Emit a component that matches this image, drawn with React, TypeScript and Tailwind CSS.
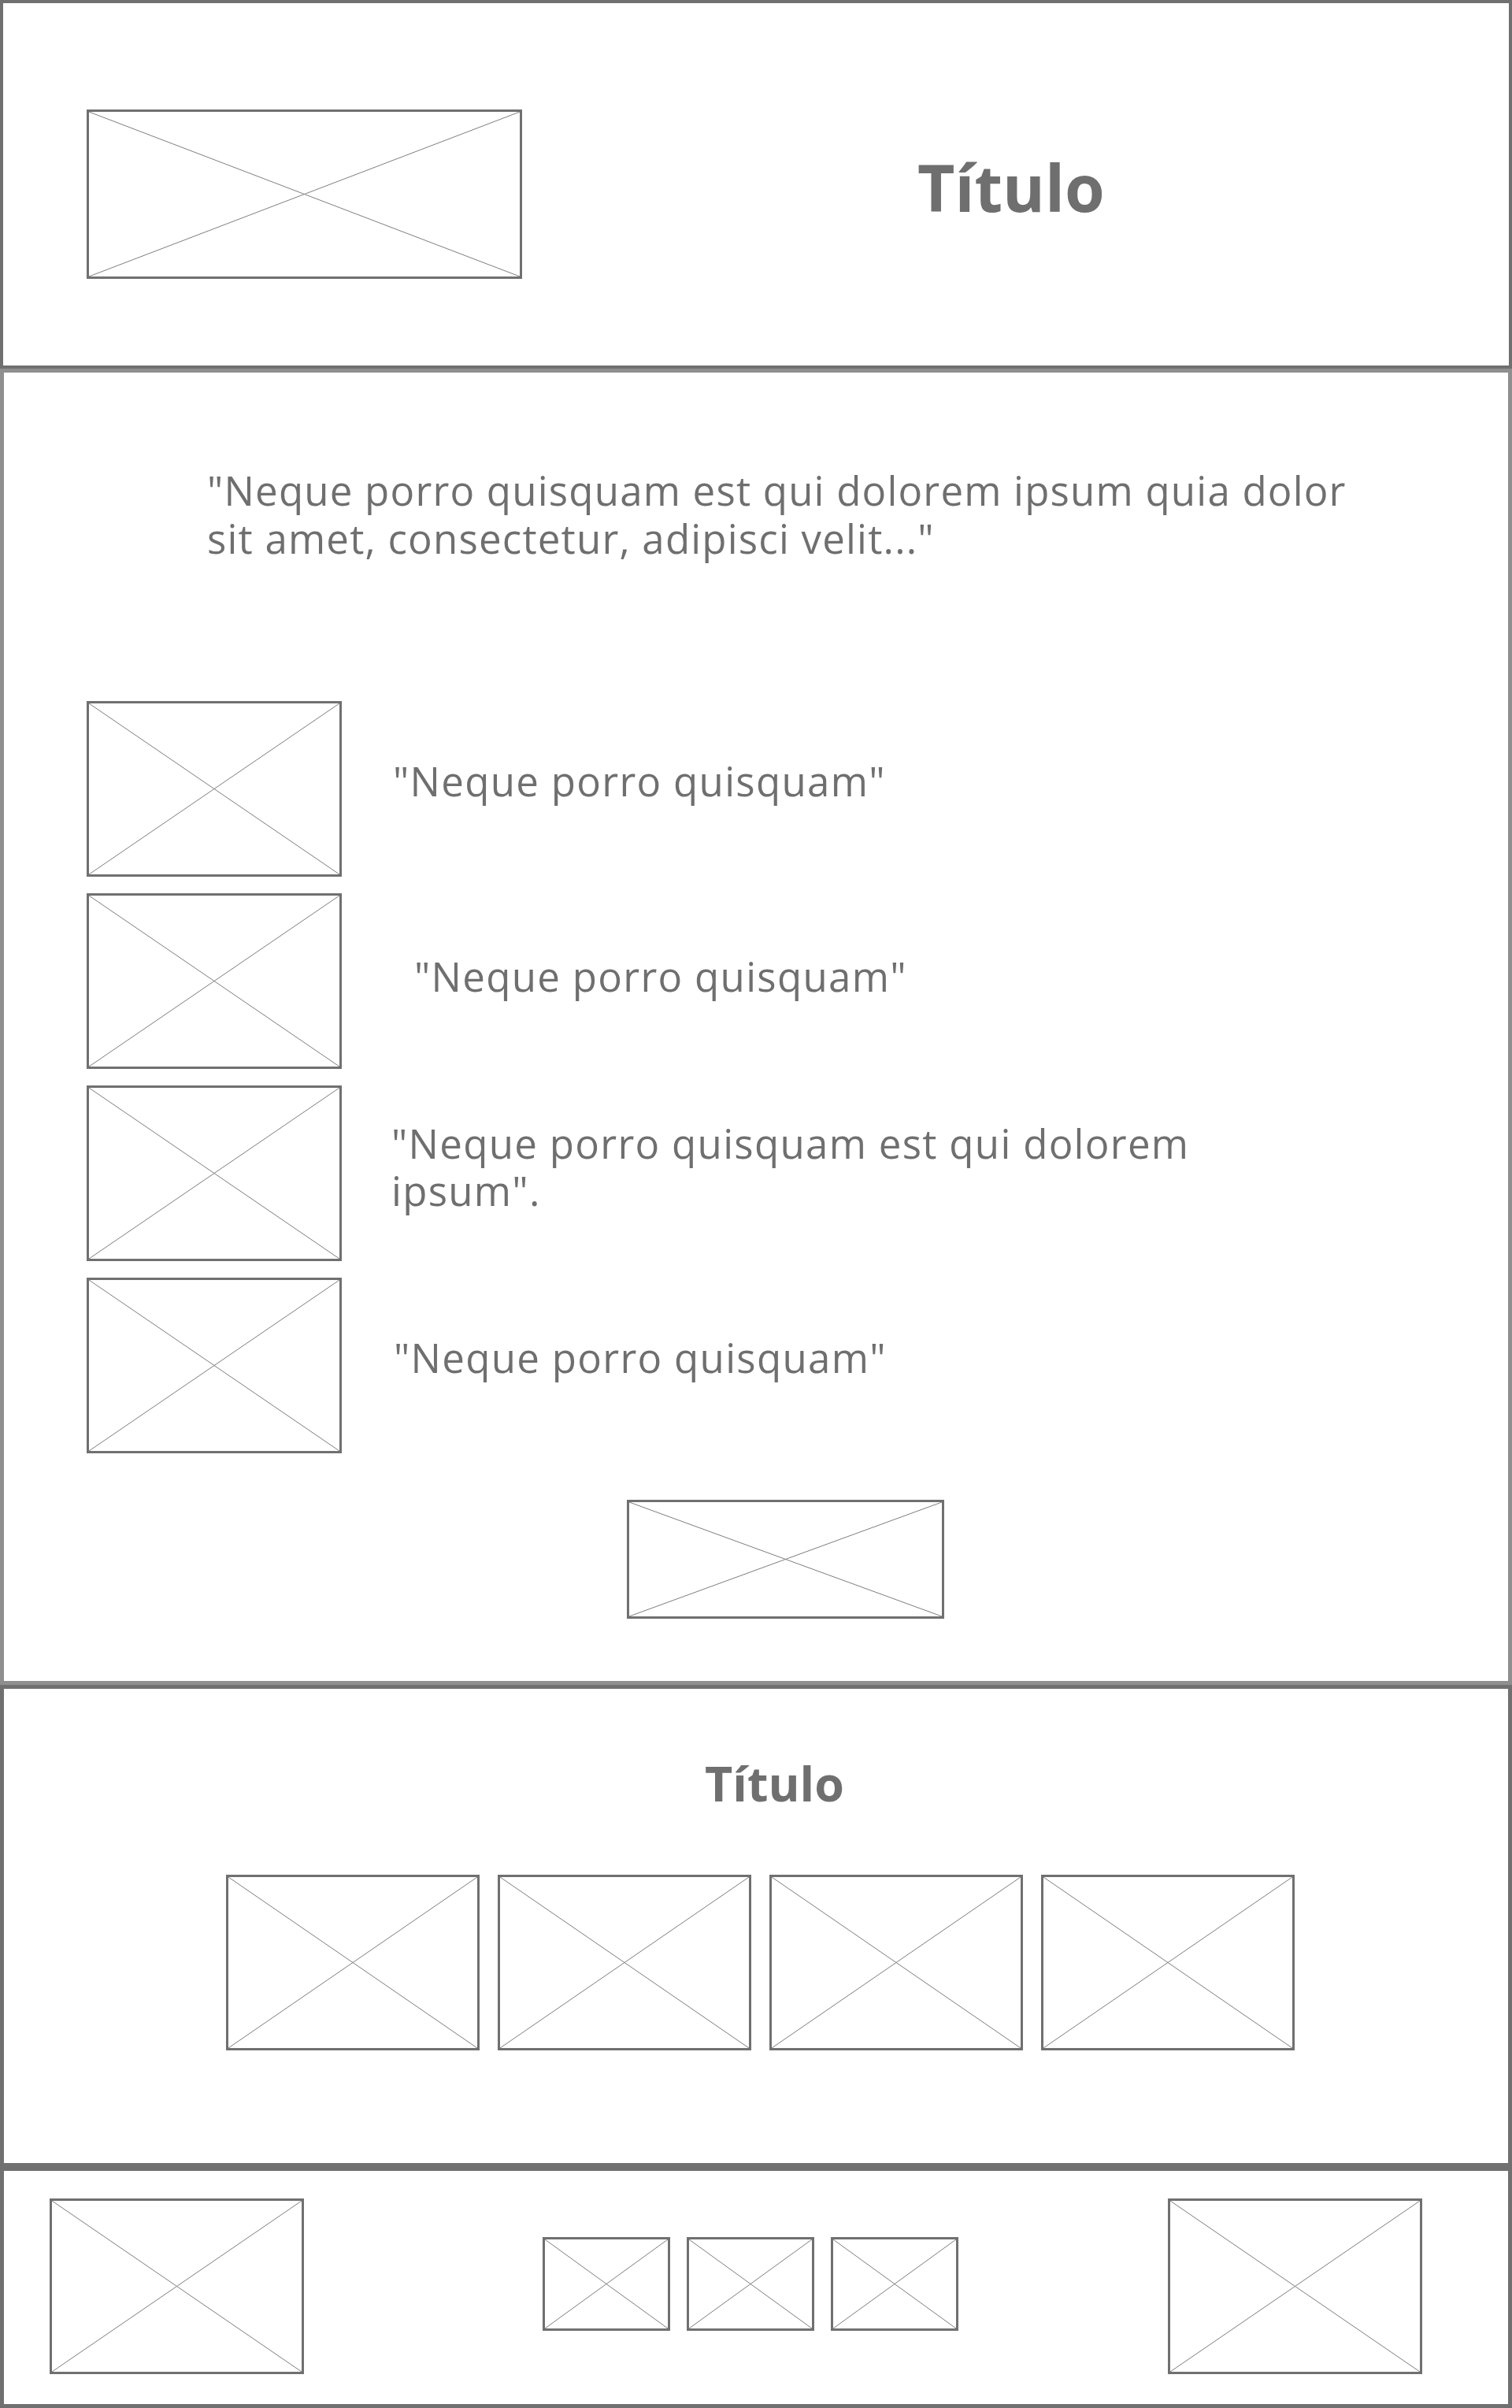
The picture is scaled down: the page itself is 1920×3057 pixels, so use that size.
import React from "react";

function XBox({ className }: { className: string }) {
  return (
    <div className={`relative shrink-0 border-[3px] border-[#707070] bg-white ${className}`}>
      <svg className="absolute inset-0 h-full w-full" preserveAspectRatio="none" viewBox="0 0 100 100">
        <line x1="0" y1="0" x2="100" y2="100" stroke="#7d7d7d" strokeWidth="1" vectorEffect="non-scaling-stroke" />
        <line x1="100" y1="0" x2="0" y2="100" stroke="#7d7d7d" strokeWidth="1" vectorEffect="non-scaling-stroke" />
      </svg>
    </div>
  );
}

const bodyText = "text-[51px] leading-[60px] tracking-[1.3px] text-[#6f6f6f] font-medium";

export default function App() {
  return (
    <div className="flex w-[1920px] flex-col bg-white font-['Open_Sans',sans-serif]">
      {/* Header */}
      <section className="flex h-[468px] items-start border-4 border-[#707070] pl-[106px] pt-[135px]">
        <XBox className="h-[215px] w-[553px]" />
        <h1 className="ml-[502px] mt-[57px] text-[82px] font-bold leading-none text-[#6f6f6f]">Título</h1>
      </section>

      {/* Main */}
      <section className="flex h-[1671px] flex-col border-[5px] border-[#8f8f8f]">
        <p className="ml-[258px] mt-[119px] text-[51px] font-medium leading-[61px] tracking-[1.2px] text-[#6f6f6f]">
          "Neque porro quisquam est qui dolorem ipsum quia dolor
          <br />
          sit amet, consectetur, adipisci velit..."
        </p>

        <div className="ml-[105px] mt-[176px] flex flex-col gap-[21px]">
          <div className="flex items-start">
            <XBox className="h-[223px] w-[324px]" />
            <p className={`ml-[65px] mt-[71px] ${bodyText}`}>"Neque porro quisquam"</p>
          </div>
          <div className="flex items-start">
            <XBox className="h-[223px] w-[324px]" />
            <p className={`ml-[92px] mt-[75px] ${bodyText}`}>"Neque porro quisquam"</p>
          </div>
          <div className="flex items-start">
            <XBox className="h-[223px] w-[324px]" />
            <p className={`ml-[63px] mt-[43px] ${bodyText}`}>
              "Neque porro quisquam est qui dolorem
              <br />
              ipsum".
            </p>
          </div>
          <div className="flex items-start">
            <XBox className="h-[223px] w-[324px]" />
            <p className={`ml-[66px] mt-[71px] ${bodyText}`}>"Neque porro quisquam"</p>
          </div>
        </div>

        <div className="ml-[791px] mt-[59px] flex">
          <XBox className="h-[151px] w-[403px]" />
        </div>
      </section>

      {/* Gallery */}
      <section className="flex h-[612px] flex-col border-[5px] border-[#707070]">
        <h2 className="ml-[890px] mt-[89px] self-start text-[61px] font-bold leading-none text-[#6f6f6f]">Título</h2>
        <div className="ml-[282px] mt-[86px] flex gap-[23px]">
          <XBox className="h-[223px] w-[322px]" />
          <XBox className="h-[223px] w-[322px]" />
          <XBox className="h-[223px] w-[322px]" />
          <XBox className="h-[223px] w-[322px]" />
        </div>
      </section>

      {/* Footer */}
      <section className="flex h-[306px] items-start border-[5px] border-[#707070] pl-[58px]">
        <XBox className="mt-[35px] h-[223px] w-[323px]" />
        <div className="ml-[303px] mt-[84px] flex gap-[21px]">
          <XBox className="h-[119px] w-[162px]" />
          <XBox className="h-[119px] w-[162px]" />
          <XBox className="h-[119px] w-[162px]" />
        </div>
        <XBox className="ml-[266px] mt-[35px] h-[223px] w-[323px]" />
      </section>
    </div>
  );
}
